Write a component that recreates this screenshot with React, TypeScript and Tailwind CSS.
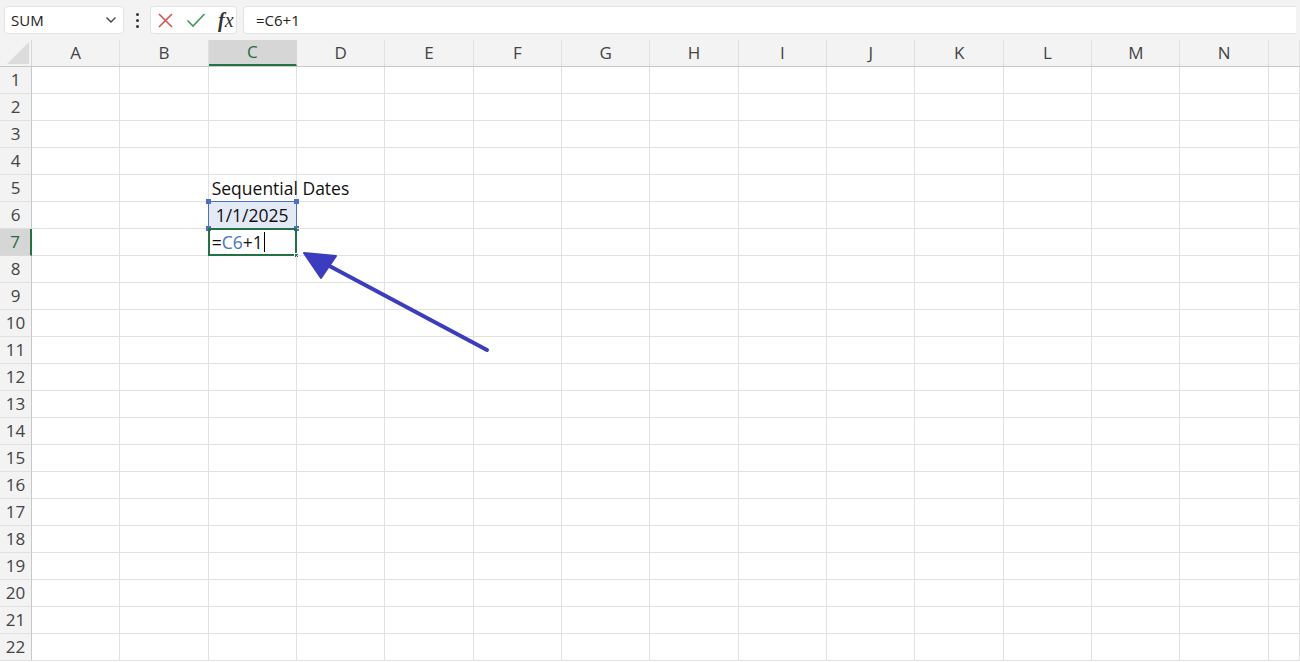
import React from 'react';

const COLS = ['A', 'B', 'C', 'D', 'E', 'F', 'G', 'H', 'I', 'J', 'K', 'L', 'M', 'N', ''];
const ROWS = Array.from({ length: 22 }, (_, i) => i + 1);

const font = { fontFamily: '"Open Sans", "Noto Sans", sans-serif' };

function FormulaBar() {
  return (
    <div className="h-[40px] bg-[#f3f3f3] flex items-center px-[4px]">
      <div className="w-[120px] h-[28px] bg-white rounded-[4px] border border-[#e3e3e3] flex items-center justify-between pl-[6px] pr-[6px]">
        <span className="text-[15px] text-[#222]">SUM</span>
        <svg width="12" height="8" viewBox="0 0 12 8" fill="none" stroke="#444" strokeWidth="1.4">
          <path d="M1.5 1.5 L6 6 L10.5 1.5" />
        </svg>
      </div>
      <div className="w-[26px] flex flex-col items-center gap-[3px]">
        <span className="w-[3px] h-[3px] bg-[#333] rounded-full" />
        <span className="w-[3px] h-[3px] bg-[#333] rounded-full" />
        <span className="w-[3px] h-[3px] bg-[#333] rounded-full" />
      </div>
      <div className="w-[87px] h-[28px] bg-white rounded-[4px] border border-[#e3e3e3] flex items-center gap-[12px] pl-[6px]">
        <svg width="17" height="17" viewBox="0 0 17 17" stroke="#d9534f" strokeWidth="1.6">
          <path d="M2 2 L15 15 M15 2 L2 15" />
        </svg>
        <svg width="20" height="16" viewBox="0 0 20 16" fill="none" stroke="#3f9a5c" strokeWidth="1.6">
          <path d="M1.5 8.5 L7 14 L18.5 2" />
        </svg>
        <span className="text-[20px] italic text-[#333] leading-none" style={{ fontFamily: '"Liberation Serif", serif' }}>
          <span className="font-bold">f</span>x
        </span>
      </div>
      <div className="flex-1 ml-[6px] h-[28px] bg-white rounded-l-[4px] border border-[#e3e3e3] border-r-0 flex items-center pl-[12px]">
        <span className="text-[15px] text-[#222]">=C6+1</span>
      </div>
    </div>
  );
}

function ColHeaders() {
  return (
    <div className="flex h-[27px] bg-[#f3f3f3] border-b border-[#c8c8c8]">
      <div className="w-[32px] shrink-0 relative border-r border-[#d8d8d8]">
        <svg className="absolute right-[2px] bottom-[2px]" width="22" height="22" viewBox="0 0 22 22">
          <path d="M22 0 L22 22 L0 22 Z" fill="#dcdcdc" />
        </svg>
      </div>
      {COLS.map((c, i) =>
        c === 'C' ? (
          <div
            key={i}
            className="w-[88.35px] shrink-0 flex items-center justify-center bg-[#d6d6d6] border-b-[2px] border-[#217346] border-r border-r-[#d8d8d8] text-[#1f6b3f] text-[17px]"
          >
            {c}
          </div>
        ) : (
          <div
            key={i}
            className={`${c ? 'w-[88.35px] shrink-0' : 'flex-1'} flex items-center justify-center border-r border-[#e0e0e0] text-[#444] text-[17px]`}
          >
            {c}
          </div>
        )
      )}
    </div>
  );
}

function Cell({ row, col }: { row: number; col: string }) {
  const base = `${col ? 'w-[88.35px] shrink-0' : 'flex-1'} border-r border-b border-[#e1e1e1] relative text-[17.5px] text-[#111] flex items-center`;
  if (col === 'C' && row === 5) {
    return (
      <div className={base}>
        <span className="pl-[3px] whitespace-nowrap">Sequential Dates</span>
      </div>
    );
  }
  if (col === 'C' && row === 6) {
    return (
      <div className={`${base} bg-[#e3eaf6]`}>
        <div className="absolute -left-[1px] -top-[1px] -right-[1px] -bottom-[1px] border-[1.5px] border-[#4a72c4]" />
        <span className="absolute -left-[3px] -top-[3px] w-[5px] h-[5px] bg-[#4a72c4]" />
        <span className="absolute -right-[3px] -top-[3px] w-[5px] h-[5px] bg-[#4a72c4]" />
        <span className="absolute -left-[3px] -bottom-[3px] w-[5px] h-[5px] bg-[#4a72c4]" />
        <span className="absolute -right-[3px] -bottom-[3px] w-[5px] h-[5px] bg-[#4a72c4]" />
        <span className="pl-[7px] relative">1/1/2025</span>
      </div>
    );
  }
  if (col === 'C' && row === 7) {
    return (
      <div className={base}>
        <div className="absolute -left-[1px] -top-[1px] -right-[1px] -bottom-[1px] border-[2px] border-[#217346]" />
        <span className="absolute -right-[3px] -bottom-[3px] w-[5px] h-[5px] bg-[#217346] border border-white" />
        <span className="pl-[3px] relative flex items-center">
          =<span className="text-[#4a72c4]">C6</span>+1
          <span className="inline-block w-[1px] h-[20px] bg-black ml-[1px]" />
        </span>
      </div>
    );
  }
  return <div className={base} />;
}

function Grid() {
  return (
    <div>
      {ROWS.map((r) => (
        <div key={r} className="flex h-[27px]">
          {r === 7 ? (
            <div className="w-[32px] shrink-0 bg-[#d6d6d6] border-r-[2px] border-[#217346] border-b border-b-[#d8d8d8] flex items-center justify-center text-[17px] text-[#1f6b3f]">
              {r}
            </div>
          ) : (
            <div className="w-[32px] shrink-0 bg-[#f3f3f3] border-r border-[#c8c8c8] border-b border-b-[#e0e0e0] flex items-center justify-center text-[17px] text-[#444]">
              {r}
            </div>
          )}
          {COLS.map((c, i) => (
            <Cell key={i} row={r} col={c} />
          ))}
        </div>
      ))}
    </div>
  );
}

export default function App() {
  return (
    <div className="w-[1300px] h-[662px] overflow-hidden bg-white relative" style={font}>
      <FormulaBar />
      <ColHeaders />
      <Grid />
      {/* annotation arrow */}
      <svg className="absolute left-0 top-0 pointer-events-none" width="1300" height="662">
        <line x1="487" y1="350" x2="322" y2="262" stroke="#3b3cc0" strokeWidth="4" strokeLinecap="round" />
        <path d="M304 253 L336 256 L321 278 Z" fill="#3b3cc0" stroke="#3b3cc0" strokeWidth="2" strokeLinejoin="round" />
      </svg>
    </div>
  );
}
